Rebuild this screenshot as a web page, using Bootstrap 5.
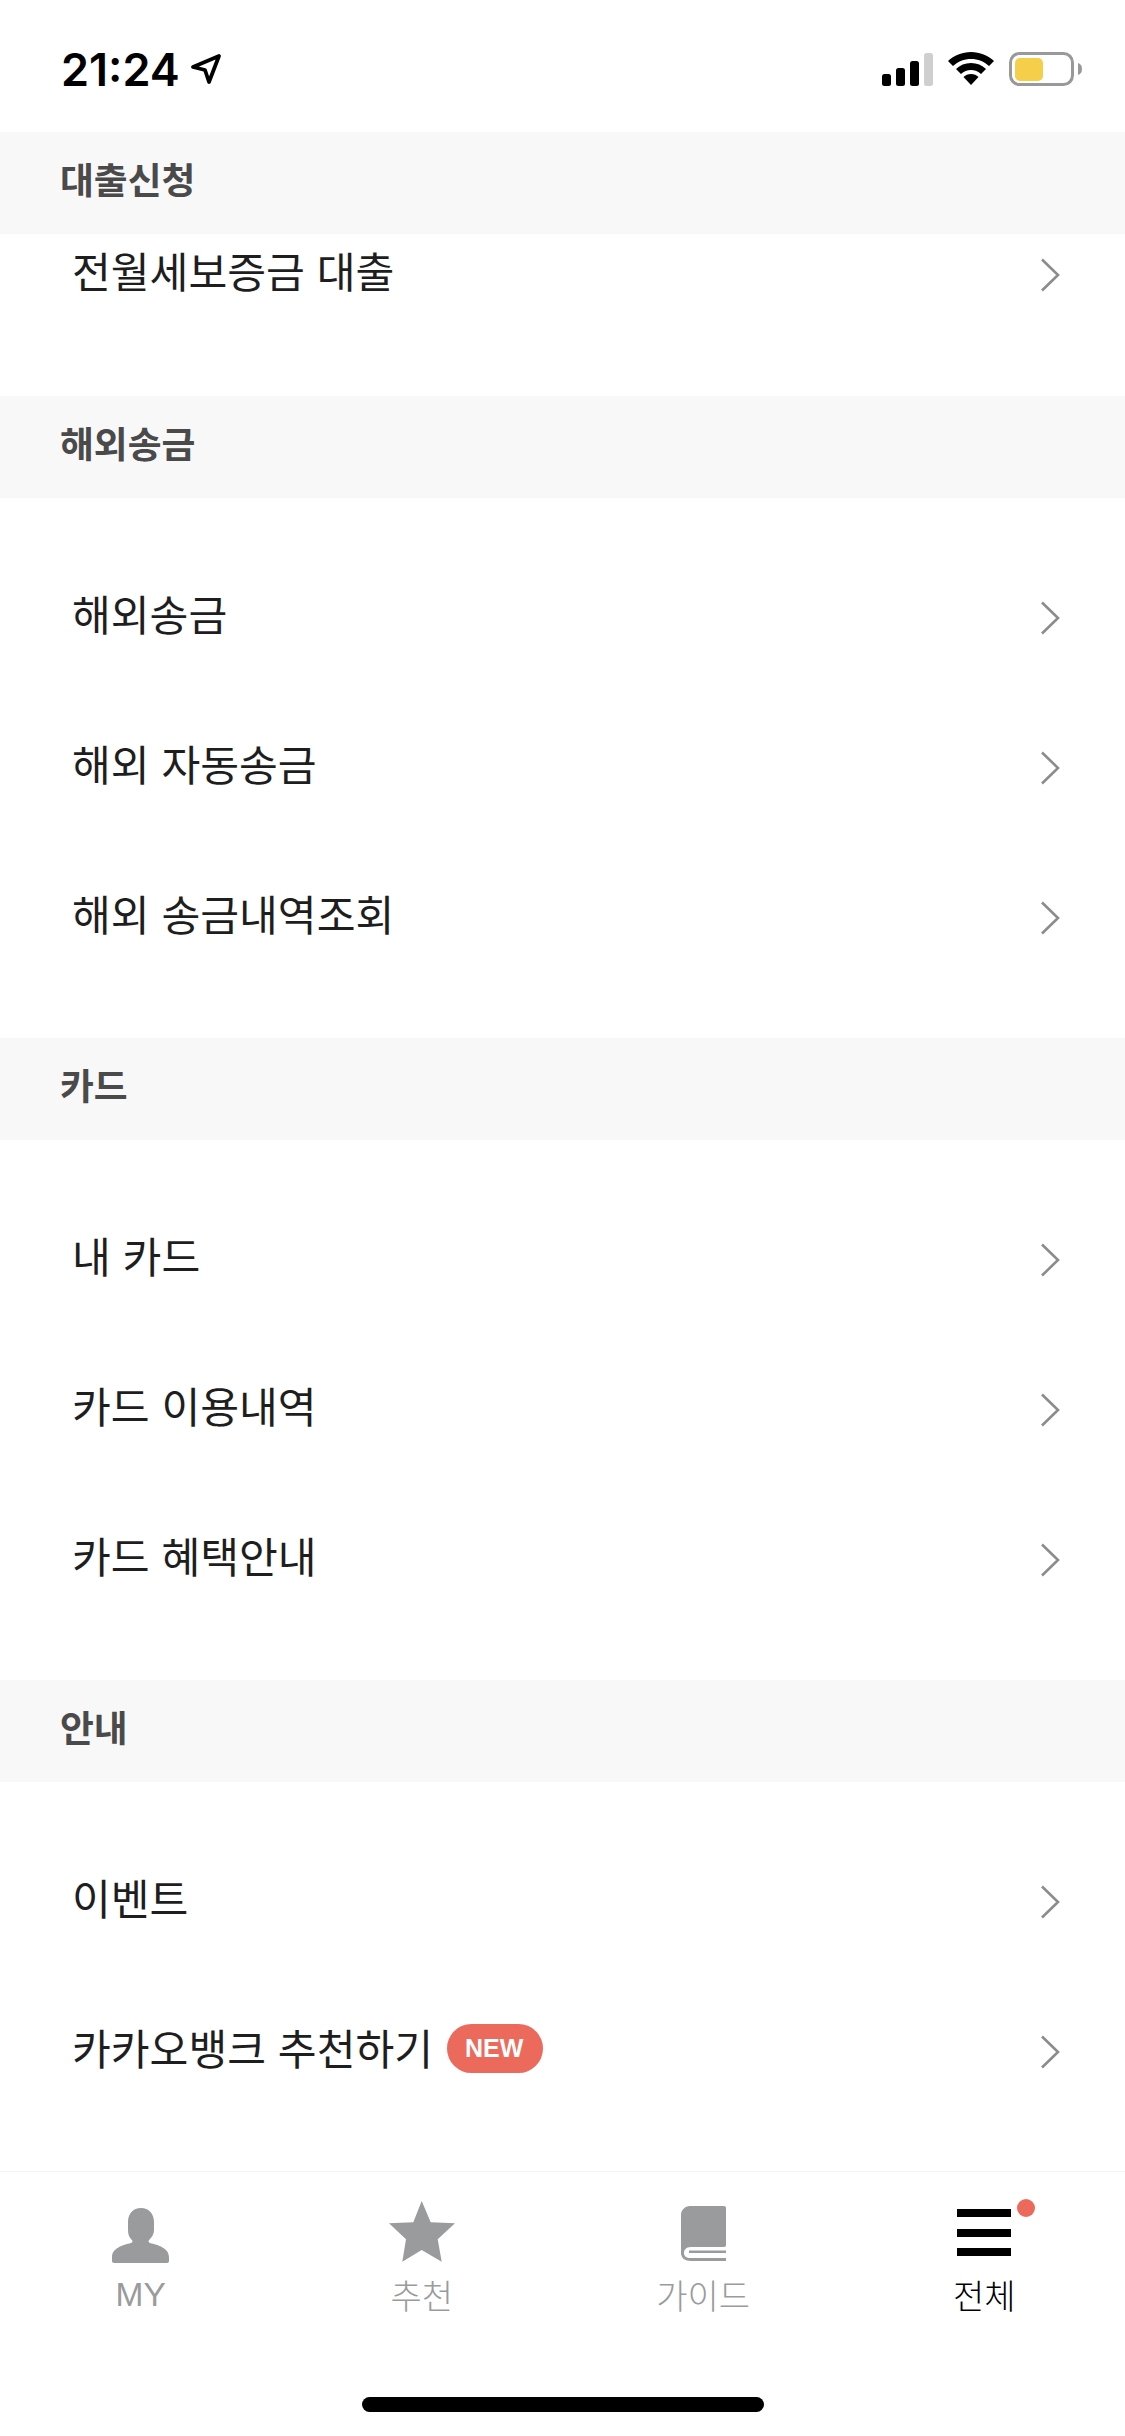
<!DOCTYPE html>
<html lang="ko">
<head>
    <meta charset="UTF-8">
    <meta name="viewport" content="width=device-width, initial-scale=1.0">
    <title>전체</title>
    <link href="https://cdn.jsdelivr.net/npm/bootstrap@5.3.2/dist/css/bootstrap.min.css" rel="stylesheet">
    <style>
        body { width: 1125px; height: 2436px; overflow: hidden; background: #fff; font-family: "Noto Sans CJK KR", "Noto Sans", sans-serif; color: #1e1e1e; }
        .status-bar { height: 132px; padding: 6px 43px 0 61px; }
        .status-time { font-family: Inter, sans-serif; font-weight: 600; font-size: 45px; line-height: 1; color: #000; margin-right: 2px; }
        .status-icons { gap: 15px; }
        .section-head { height: 102px; padding: 0 0 8px 60px; background: #f8f8f8; font-size: 36.8px; font-weight: 700; color: #4a4a4a; position: relative; z-index: 1; }
        .menu-list { padding: 44px 0 46px; }
        .menu-list.scrolled { margin-top: -35px; padding: 0 0 47px; }
        .menu-item { height: 150px; padding: 0 65px 8px 72px; border: 0; font-size: 42.2px; color: #1e1e1e; background: transparent; }
        .new-tag { background: #ec6a5c; font-family: "Liberation Sans", sans-serif; font-size: 25px; font-weight: 700; width: 96px; height: 49px; padding: 0 2px 0 0; margin: 3px 0 0 14px; line-height: 49px; }
        .chev { width: 20px; height: 36px; margin-top: 10px; fill: none; stroke: #8c8c8c; stroke-width: 2.6; }
        .tab-bar { height: 265px; border-top: 1px solid #f3f3f3; }
        .tab-cell { height: 225px; padding-top: 27px; color: #999b9d; font-size: 34px; line-height: 44px; font-weight: 300; }
        .tab-cell.active { color: #000; }
        .tab-icon { height: 65px; margin-bottom: 9px; position: relative; }
        .tab-dot { position: absolute; top: 0; left: 60px; width: 18px; height: 18px; border-radius: 50%; background: #ec6a5c; }
        .tab-my { font-family: "Liberation Sans", sans-serif; font-size: 33.5px; font-weight: 400; }
        .home-bar { width: 402px; height: 15px; border-radius: 8px; background: #000; }
    </style>
</head>
<body class="d-flex flex-column">
    <svg width="0" height="0" class="position-absolute">
        <symbol id="chev" viewBox="0 0 20 36"><path d="M2 2.500 18 18 2 33.500"/></symbol>
    </svg>

    <div class="status-bar d-flex align-items-center justify-content-between flex-shrink-0">
        <div class="d-flex align-items-center gap-2">
            <span class="status-time">21:24</span>
            <svg width="32" height="32" viewBox="0 0 32 32"><path d="M29 3 3 14l12 3 4 12z" fill="none" stroke="#000" stroke-width="3.800" stroke-linejoin="round"/></svg>
        </div>
        <div class="status-icons d-flex align-items-center">
            <svg width="51" height="33" viewBox="0 0 51 33">
                <rect x="0" y="21" width="9" height="12" rx="2.500"/>
                <rect x="14" y="15" width="9" height="18" rx="2.500"/>
                <rect x="28" y="8" width="9" height="25" rx="2.500"/>
                <rect x="42" y="0" width="9" height="33" rx="2.500" fill="#cfcfcf"/>
            </svg>
            <svg width="46" height="34" viewBox="0 0 46 34">
                <path d="M23 0C14 0 6 3.500 0 9l5 5C10 9.500 16 7 23 7s13 2.500 18 7l5-5C40 3.500 32 0 23 0z"/>
                <path d="M23 11c-6 0-11 2-15 6l5 5c3-2.500 6-4 10-4s7 1.500 10 4l5-5c-4-4-9-6-15-6z"/>
                <path d="M23 22c-3 0-5.500 1-7.500 3L23 33l7.500-8c-2-2-4.500-3-7.500-3z"/>
            </svg>
            <svg width="73" height="34" viewBox="0 0 73 34">
                <rect x="1.500" y="1.500" width="62" height="31" rx="9" fill="none" stroke="#999" stroke-width="3"/>
                <rect x="6" y="6" width="28" height="23" rx="5" fill="#f6cf4a"/>
                <path d="M69 11c3 1 4 3 4 6s-1 5-4 6z" fill="#999"/>
            </svg>
        </div>
    </div>

    <main class="flex-grow-1 overflow-hidden">
        <div class="section-head d-flex align-items-center">대출신청</div>
        <div class="menu-list scrolled list-group list-group-flush">
            <a class="menu-item list-group-item d-flex align-items-center justify-content-between">전월세보증금 대출<svg class="chev"><use href="#chev"/></svg></a>
        </div>

        <div class="section-head d-flex align-items-center">해외송금</div>
        <div class="menu-list list-group list-group-flush">
            <a class="menu-item list-group-item d-flex align-items-center justify-content-between">해외송금<svg class="chev"><use href="#chev"/></svg></a>
            <a class="menu-item list-group-item d-flex align-items-center justify-content-between">해외 자동송금<svg class="chev"><use href="#chev"/></svg></a>
            <a class="menu-item list-group-item d-flex align-items-center justify-content-between">해외 송금내역조회<svg class="chev"><use href="#chev"/></svg></a>
        </div>

        <div class="section-head d-flex align-items-center">카드</div>
        <div class="menu-list list-group list-group-flush">
            <a class="menu-item list-group-item d-flex align-items-center justify-content-between">내 카드<svg class="chev"><use href="#chev"/></svg></a>
            <a class="menu-item list-group-item d-flex align-items-center justify-content-between">카드 이용내역<svg class="chev"><use href="#chev"/></svg></a>
            <a class="menu-item list-group-item d-flex align-items-center justify-content-between">카드 혜택안내<svg class="chev"><use href="#chev"/></svg></a>
        </div>

        <div class="section-head d-flex align-items-center">안내</div>
        <div class="menu-list list-group list-group-flush">
            <a class="menu-item list-group-item d-flex align-items-center justify-content-between">이벤트<svg class="chev"><use href="#chev"/></svg></a>
            <a class="menu-item list-group-item d-flex align-items-center justify-content-between"><span class="d-flex align-items-center">카카오뱅크 추천하기<span class="new-tag badge rounded-pill">NEW</span></span><svg class="chev"><use href="#chev"/></svg></a>
        </div>
    </main>

    <nav class="tab-bar flex-shrink-0">
        <div class="row g-0">
            <div class="tab-cell col-3 d-flex flex-column align-items-center">
                <div class="tab-icon">
                    <svg class="d-block" width="57" height="65" viewBox="0 -9 57 65" fill="#999b9d"><path d="M29 0c8 0 13 6 13 14v8c0 4-2 7-4 9-2 2-2 3 0 4 8 2 19 5 19 14v4c0 1-1 2-2 2H2c-1 0-2-1-2-2v-4c0-9 11-12 19-14 2-1 2-2 0-4-2-2-3-5-3-9v-8C16 6 21 0 29 0z"/></svg>
                </div>
                <span class="tab-my">MY</span>
            </div>
            <div class="tab-cell col-3 d-flex flex-column align-items-center">
                <div class="tab-icon">
                    <svg class="d-block" width="66" height="65" viewBox="0 -2 66 65" fill="#999b9d"><path d="M32.700 0l9 21.300L66 22.300 48.700 38.300l4 22.400-20-11.700-19.400 11.700L17 38.300 0 22.300l24.300-1z"/></svg>
                </div>
                <span>추천</span>
            </div>
            <div class="tab-cell col-3 d-flex flex-column align-items-center">
                <div class="tab-icon">
                    <svg class="d-block" width="45" height="65" viewBox="0 -7 45 65" fill="#999b9d">
                        <path d="M9 0h34a2 2 0 0 1 2 2v37a2 2 0 0 1-2 2H10c-5 0-7 3-7 6s2 5 7 5h35v3H10C4 55 0 52 0 47V9C0 4 4 0 9 0z"/>
                        <rect x="8" y="44.500" width="37" height="2.500"/>
                    </svg>
                </div>
                <span>가이드</span>
            </div>
            <div class="tab-cell active col-3 d-flex flex-column align-items-center">
                <div class="tab-icon">
                    <svg class="d-block" width="54" height="65" viewBox="0 0 54 65"><rect y="10" width="54" height="8"/><rect y="30" width="54" height="8"/><rect y="49" width="54" height="8"/></svg>
                    <span class="tab-dot"></span>
                </div>
                <span>전체</span>
            </div>
        </div>
        <div class="home-bar mx-auto"></div>
    </nav>

    <script src="https://cdn.jsdelivr.net/npm/bootstrap@5.3.2/dist/js/bootstrap.bundle.min.js"></script>
</body>
</html>
